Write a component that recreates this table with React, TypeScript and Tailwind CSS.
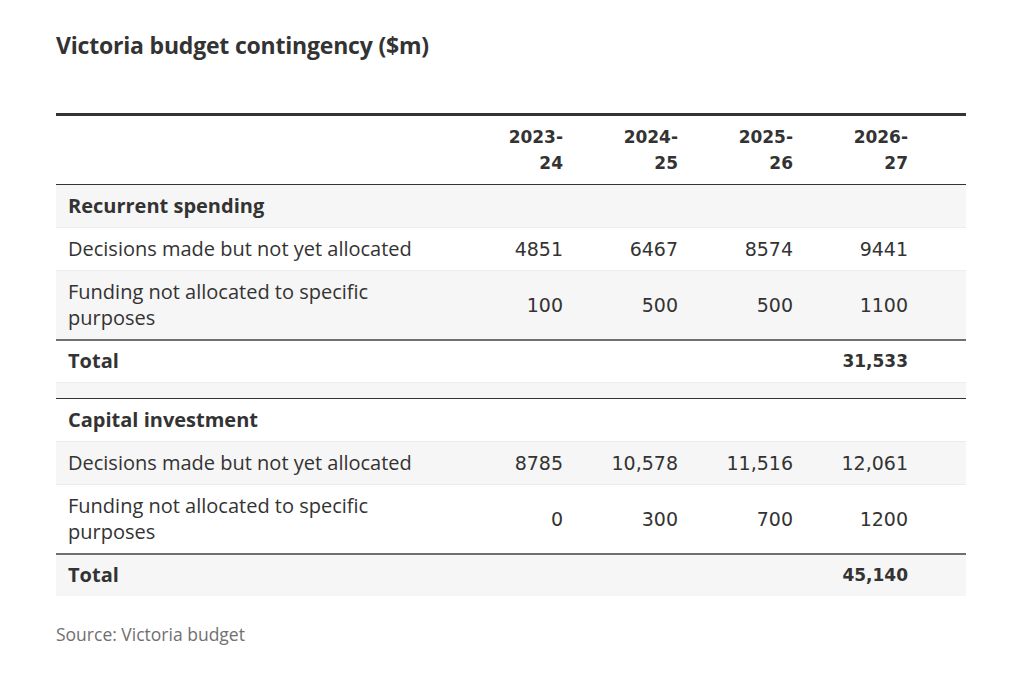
import React from "react";

type Row = {
  label: string;
  values: string[];
  kind: "section" | "data" | "total" | "spacer";
  border?: "light" | "total" | "dark";
};

const rows: Row[] = [
  { label: "Recurrent spending", values: ["", "", "", ""], kind: "section" },
  { label: "Decisions made but not yet allocated", values: ["4851", "6467", "8574", "9441"], kind: "data", border: "light" },
  { label: "Funding not allocated to specific purposes", values: ["100", "500", "500", "1100"], kind: "data", border: "light" },
  { label: "Total", values: ["", "", "", "31,533"], kind: "total", border: "total" },
  { label: "", values: ["", "", "", ""], kind: "spacer", border: "light" },
  { label: "Capital investment", values: ["", "", "", ""], kind: "section", border: "dark" },
  { label: "Decisions made but not yet allocated", values: ["8785", "10,578", "11,516", "12,061"], kind: "data", border: "light" },
  { label: "Funding not allocated to specific purposes", values: ["0", "300", "700", "1200"], kind: "data", border: "light" },
  { label: "Total", values: ["", "", "", "45,140"], kind: "total", border: "total" },
];

const years = [
  ["2023-", "24"],
  ["2024-", "25"],
  ["2025-", "26"],
  ["2026-", "27"],
];

const sans = "font-['Open_Sans','Noto_Sans',sans-serif]";
const num = "font-['DejaVu_Sans',sans-serif]";

export default function App() {
  return (
    <div className="w-[1024px] h-[680px] bg-white text-[#333333] overflow-hidden">
      <div className="pl-[56px] pr-[58px] pt-[28px]">
        <h1 className={`${sans} text-[23px] leading-[34px] font-bold tracking-[-0.2px]`}>
          Victoria budget contingency ($m)
        </h1>

        <div className="mt-[51px] border-t-[3px] border-[#333333]">
          <div className="grid grid-cols-[1fr_115px_115px_115px_115px] pr-[58px] py-[8px] border-b border-[#333333]">
            <div />
            {years.map((y, i) => (
              <div key={i} className={`${num} text-[17px] leading-[26px] font-bold text-right`}>
                <div>{y[0]}</div>
                <div>{y[1]}</div>
              </div>
            ))}
          </div>

          {rows.map((r, i) => {
            const bg = i % 2 === 0 ? "bg-[#f6f6f6]" : "bg-white";
            const border =
              r.border === "total"
                ? "border-t-2 border-[#707070] pt-[7px] pb-[8px]"
                : r.border === "dark"
                ? "border-t border-[#333333] py-[8px]"
                : r.border === "light"
                ? "border-t border-[#ececec] py-[8px]"
                : "py-[8px]";
            if (r.kind === "spacer") {
              return <div key={i} className={`${bg} border-t border-[#ececec] h-[16px]`} />;
            }
            const bold = r.kind === "section" || r.kind === "total";
            return (
              <div
                key={i}
                className={`${bg} ${border} grid grid-cols-[1fr_115px_115px_115px_115px] pr-[58px] items-center`}
              >
                <div className={`${sans} pl-[12px] text-[20px] leading-[26px] ${bold ? "font-bold" : ""} max-w-[382px]`}>
                  {r.label}
                </div>
                {r.values.map((v, j) => (
                  <div
                    key={j}
                    className={`${num} leading-[26px] text-right ${bold ? "font-bold text-[17px]" : "text-[19px]"}`}
                  >
                    {v}
                  </div>
                ))}
              </div>
            );
          })}
        </div>

        <div className={`${sans} mt-[26px] text-[17.5px] leading-[24px] text-[#707070]`}>
          Source: Victoria budget
        </div>
      </div>
    </div>
  );
}
